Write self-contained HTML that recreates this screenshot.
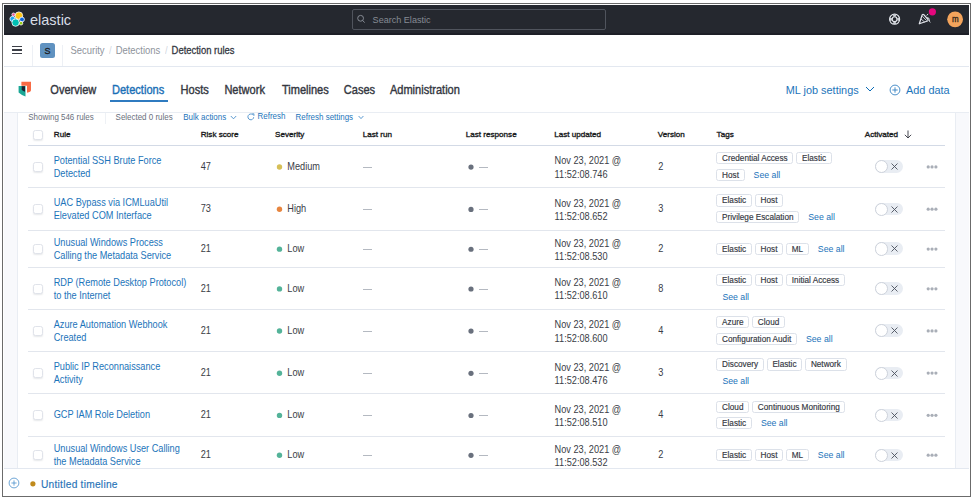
<!DOCTYPE html><html><head><meta charset="utf-8"><style>
*{margin:0;padding:0;box-sizing:content-box}
html,body{width:976px;height:500px;overflow:hidden;background:#fff}
body{position:relative;font-family:"Liberation Sans",sans-serif}
.b,.t{position:absolute}
.t{white-space:nowrap}
.tagline{position:absolute;display:flex;align-items:center;height:12.3px;white-space:nowrap}
.badge{display:inline-block;height:10.3px;line-height:12.4px;border:1px solid #dce1e9;border-radius:2.5px;padding:0 4.7px;font-size:8.2px;color:#343741;margin-right:3px;background:#fff;-webkit-text-stroke:0.15px #343741}
.seeall{display:inline-block;font-size:8.73px;color:#1c74ba;padding-left:6px;line-height:12px}
.toggle{position:absolute;width:28px;height:12.6px;border-radius:7px;background:#e9edf3}
.knob{position:absolute;left:0;top:0;width:11.2px;height:11.2px;border-radius:50%;background:#fff;border:0.7px solid #cdd2db}
</style></head><body><div class="b" style="left:2px;top:3px;width:967px;height:492px;border:1px solid #6b6b6b;"></div>
<div class="b" style="left:4px;top:5px;width:965px;height:30px;background:#25282f;"></div>
<div class="b" style="left:4px;top:33px;width:965px;height:2px;background:#1d1f27;"></div>
<div class="b" style="left:4px;top:66px;width:965px;height:1px;background:#e3e8f0;"></div>
<div class="b" style="left:4px;top:112px;width:965px;height:1px;background:#e9edf3;"></div>
<div class="b" style="left:4px;top:113px;width:965px;height:355px;background:#f8f9fc;"></div>
<div class="b" style="left:17px;top:113px;width:937px;height:355px;background:#fff;border-left:1px solid #e9edf3;border-right:1px solid #e9edf3;"></div>
<div class="b" style="left:4px;top:468px;width:965px;height:1px;background:#e3e8f0;"></div>
<div class="b" style="left:4px;top:469px;width:965px;height:27px;background:#fff;"></div>
<svg class="b" style="left:8px;top:10px" width="18" height="18" viewBox="0 0 18 18">
<g stroke="#fff" stroke-width="0.8">
<circle cx="10.9" cy="5.7" r="3.8" fill="#fec514"/>
<circle cx="4.5" cy="8.9" r="2.6" fill="#1ba9f5"/>
<circle cx="14" cy="9.5" r="2.4" fill="#0b64dd"/>
<circle cx="13" cy="13.2" r="1.8" fill="#93c90e"/>
<circle cx="7.6" cy="12.6" r="3.7" fill="#00bfb3"/>
<circle cx="5.5" cy="4.6" r="1.6" fill="#f04e98"/>
</g></svg>
<div class="t" style="left:30.00px;top:10.98px;font-size:14.5px;line-height:19px;color:#d8dde6;font-weight:400;">elastic</div>
<div class="b" style="left:352px;top:9px;width:252px;height:19px;border:1.3px solid #50545d;border-radius:2px;background:#25282f;"></div>
<svg class="b" style="left:356px;top:14px" width="10" height="10" viewBox="0 0 10 10"><circle cx="4.6" cy="4.3" r="2.9" fill="none" stroke="#868b94" stroke-width="1"/><path d="M6.6 6.4 L8.6 8.6" stroke="#868b94" stroke-width="1"/></svg>
<div class="t" style="left:372.60px;top:13.76px;font-size:9.07px;line-height:12px;color:#868b94;font-weight:400;transform:scaleY(1.1);transform-origin:0 9.14px;">Search Elastic</div>
<svg class="b" style="left:888px;top:13px" width="13" height="13" viewBox="0 0 13 13"><circle cx="6.6" cy="6.2" r="5.05" fill="none" stroke="#e8ebf0" stroke-width="1.1"/><circle cx="6.6" cy="6.2" r="2.4" fill="none" stroke="#e8ebf0" stroke-width="1.1"/><path d="M10.08 4.80 A3.75 3.75 0 0 1 10.08 7.60 M8.00 9.68 A3.75 3.75 0 0 1 5.20 9.68 M3.12 7.60 A3.75 3.75 0 0 1 3.12 4.80 M5.20 2.72 A3.75 3.75 0 0 1 8.00 2.72" fill="none" stroke="#c9ccd2" stroke-width="2.2"/></svg>
<svg class="b" style="left:918px;top:13px" width="14" height="12" viewBox="0 0 14 12"><path d="M1.3 10.8 L4.2 1.8 Q5 1 6 1.8 L10 6.5 Q10.5 7.5 9.5 8 Z" fill="none" stroke="#e3e6ec" stroke-width="1.2" stroke-linejoin="round"/><path d="M3 6 L6.8 9.2 M4.3 3.2 L8.6 7.6" fill="none" stroke="#e3e6ec" stroke-width="0.8"/><path d="M9 4.8 Q11.3 4.3 11.2 6.6 Q11.2 8.6 12.3 9.4 M8.6 2.4 L10.2 1" fill="none" stroke="#e3e6ec" stroke-width="1"/></svg>
<svg class="b" style="left:927px;top:7px" width="10" height="10"><circle cx="5.40" cy="4.80" r="3.6" fill="#e6077e"/></svg>
<svg class="b" style="left:946px;top:10px" width="18" height="18"><circle cx="9.10" cy="9.30" r="7.9" fill="#f3a45c"/></svg>
<div class="t" style="left:951.90px;top:14.73px;font-size:8.0px;line-height:10px;color:#2a2118;font-weight:400;transform:scaleY(1.05);transform-origin:0 7.77px;-webkit-text-stroke:0.25px #2a2118;">m</div>
<div class="b" style="left:12px;top:46.099999999999994px;width:10.2px;height:1.4px;background:#3d4048;"></div>
<div class="b" style="left:12px;top:49.4px;width:10.2px;height:1.4px;background:#3d4048;"></div>
<div class="b" style="left:12px;top:52.699999999999996px;width:10.2px;height:1.4px;background:#3d4048;"></div>
<div class="b" style="left:32px;top:45px;width:1px;height:21px;background:#edf0f5;"></div>
<div class="b" style="left:40px;top:43px;width:15px;height:15px;background:#6092c0;border-radius:2.5px;"></div>
<div class="t" style="left:44.60px;top:44.88px;font-size:9.0px;line-height:12px;color:#1a1c21;font-weight:400;transform:scaleY(1.05);transform-origin:0 9.12px;-webkit-text-stroke:0.3px #1a1c21;">S</div>
<div class="b" style="left:62px;top:45px;width:1px;height:21px;background:#edf0f5;"></div>
<div class="t" style="left:70.50px;top:44.53px;font-size:9.45px;line-height:12px;color:#8e939b;font-weight:400;transform:scaleY(1.1);transform-origin:0 9.27px;">Security</div>
<div class="t" style="left:109.00px;top:44.53px;font-size:9.45px;line-height:12px;color:#d3d8df;font-weight:400;transform:scaleY(1.1);transform-origin:0 9.27px;">/</div>
<div class="t" style="left:115.70px;top:44.53px;font-size:9.45px;line-height:12px;color:#8e939b;font-weight:400;transform:scaleY(1.1);transform-origin:0 9.27px;">Detections</div>
<div class="t" style="left:165.00px;top:44.53px;font-size:9.45px;line-height:12px;color:#d3d8df;font-weight:400;transform:scaleY(1.1);transform-origin:0 9.27px;">/</div>
<div class="t" style="left:171.60px;top:44.53px;font-size:9.45px;line-height:12px;color:#343741;font-weight:400;transform:scaleY(1.1);transform-origin:0 9.27px;-webkit-text-stroke:0.25px #343741;">Detection rules</div>
<svg class="b" style="left:17px;top:80px" width="16" height="18" viewBox="0 0 16 18">
<path d="M4.4 1.8 H14 V10 Q14 12 10 12.8 V5.8 H4.4 Z" fill="#f86b45"/>
<path d="M1.6 6 H8.5 V16.6 Q5 15.5 1.6 12.5 Z" fill="#1ba796"/>
<path d="M4.7 6.3 H8 V11.8 Q5 11 4.7 9.5 Z" fill="#1d1e2f"/>
</svg>
<div class="t" style="left:50.30px;top:83.07px;font-size:11.05px;line-height:14px;color:#343741;font-weight:400;transform:scaleY(1.1);transform-origin:0 10.83px;-webkit-text-stroke:0.35px currentColor;">Overview</div>
<div class="t" style="left:112.00px;top:83.07px;font-size:11.05px;line-height:14px;color:#1a6fb6;font-weight:400;transform:scaleY(1.1);transform-origin:0 10.83px;-webkit-text-stroke:0.35px currentColor;">Detections</div>
<div class="b" style="left:110px;top:100px;width:58px;height:2px;background:#2f7bc0;"></div>
<div class="t" style="left:180.60px;top:83.07px;font-size:11.05px;line-height:14px;color:#343741;font-weight:400;transform:scaleY(1.1);transform-origin:0 10.83px;-webkit-text-stroke:0.35px currentColor;">Hosts</div>
<div class="t" style="left:224.40px;top:83.07px;font-size:11.05px;line-height:14px;color:#343741;font-weight:400;transform:scaleY(1.1);transform-origin:0 10.83px;-webkit-text-stroke:0.35px currentColor;">Network</div>
<div class="t" style="left:281.90px;top:83.07px;font-size:11.05px;line-height:14px;color:#343741;font-weight:400;transform:scaleY(1.1);transform-origin:0 10.83px;-webkit-text-stroke:0.35px currentColor;">Timelines</div>
<div class="t" style="left:343.80px;top:83.07px;font-size:11.05px;line-height:14px;color:#343741;font-weight:400;transform:scaleY(1.1);transform-origin:0 10.83px;-webkit-text-stroke:0.35px currentColor;">Cases</div>
<div class="t" style="left:389.90px;top:83.07px;font-size:11.05px;line-height:14px;color:#343741;font-weight:400;transform:scaleY(1.1);transform-origin:0 10.83px;-webkit-text-stroke:0.35px currentColor;">Administration</div>
<div class="t" style="left:785.80px;top:82.72px;font-size:10.9px;line-height:14px;color:#1c74ba;font-weight:400;">ML job settings</div>
<svg class="b" style="left:865px;top:86px" width="10" height="6" viewBox="0 0 10 6"><path d="M1 1 L5 5 L9 1" fill="none" stroke="#0b6bb6" stroke-width="1"/></svg>
<svg class="b" style="left:889px;top:83.5px" width="12" height="12" viewBox="0 0 12 12"><circle cx="6" cy="6" r="4.9" fill="none" stroke="#2a7bbf" stroke-width="0.85"/><path d="M6 3.3 V8.7 M3.3 6 H8.7" stroke="#2a7bbf" stroke-width="0.85"/></svg>
<div class="t" style="left:906.00px;top:82.72px;font-size:10.9px;line-height:14px;color:#1c74ba;font-weight:400;">Add data</div>
<div class="t" style="left:28.30px;top:113.44px;font-size:7.96px;line-height:10px;color:#69707d;font-weight:400;transform:scaleY(1.1);transform-origin:0 7.76px;">Showing 546 rules</div>
<div class="b" style="left:104.5px;top:113px;width:1px;height:11px;background:#eef1f5;"></div>
<div class="t" style="left:115.60px;top:113.44px;font-size:7.96px;line-height:10px;color:#69707d;font-weight:400;transform:scaleY(1.1);transform-origin:0 7.76px;">Selected 0 rules</div>
<div class="t" style="left:183.30px;top:113.44px;font-size:7.96px;line-height:10px;color:#1c74ba;font-weight:400;transform:scaleY(1.1);transform-origin:0 7.76px;">Bulk actions</div>
<svg class="b" style="left:230px;top:115px" width="7" height="5" viewBox="0 0 7 5"><path d="M0.8 1 L3.5 3.8 L6.2 1" fill="none" stroke="#3f88c8" stroke-width="0.85"/></svg>
<svg class="b" style="left:247px;top:113px" width="8" height="8" viewBox="0 0 8 8"><path d="M6.7 4.2 A2.9 2.9 0 1 1 5.6 1.6" fill="none" stroke="#3f88c8" stroke-width="0.85"/><path d="M6.9 0.7 V2.9 M6.9 0.9 H4.9" fill="none" stroke="#3f88c8" stroke-width="0.85"/></svg>
<div class="t" style="left:257.60px;top:112.44px;font-size:7.96px;line-height:10px;color:#1c74ba;font-weight:400;transform:scaleY(1.1);transform-origin:0 7.76px;">Refresh</div>
<div class="t" style="left:295.60px;top:113.44px;font-size:7.96px;line-height:10px;color:#1c74ba;font-weight:400;transform:scaleY(1.1);transform-origin:0 7.76px;">Refresh settings</div>
<svg class="b" style="left:358px;top:115px" width="6" height="5" viewBox="0 0 6 5"><path d="M0.6 1 L3 3.6 L5.4 1" fill="none" stroke="#3f88c8" stroke-width="0.85"/></svg>
<div class="b" style="left:33.3px;top:129.5px;width:9.6px;height:10.2px;border:1px solid #e0e3ea;border-radius:2.5px;box-sizing:border-box;background:#fff;box-shadow:0 1px 1.5px rgba(60,70,90,0.12);"></div>
<div class="t" style="left:53.80px;top:129.29px;font-size:8.1px;line-height:11px;color:#1a1c21;font-weight:400;-webkit-text-stroke:0.35px currentColor;">Rule</div>
<div class="t" style="left:200.70px;top:129.29px;font-size:8.1px;line-height:11px;color:#1a1c21;font-weight:400;-webkit-text-stroke:0.35px currentColor;">Risk score</div>
<div class="t" style="left:275.00px;top:129.29px;font-size:8.1px;line-height:11px;color:#1a1c21;font-weight:400;-webkit-text-stroke:0.35px currentColor;">Severity</div>
<div class="t" style="left:362.70px;top:129.29px;font-size:8.1px;line-height:11px;color:#1a1c21;font-weight:400;-webkit-text-stroke:0.35px currentColor;">Last run</div>
<div class="t" style="left:465.80px;top:129.29px;font-size:8.1px;line-height:11px;color:#1a1c21;font-weight:400;-webkit-text-stroke:0.35px currentColor;">Last response</div>
<div class="t" style="left:554.30px;top:129.29px;font-size:8.1px;line-height:11px;color:#1a1c21;font-weight:400;-webkit-text-stroke:0.35px currentColor;">Last updated</div>
<div class="t" style="left:657.80px;top:129.29px;font-size:8.1px;line-height:11px;color:#1a1c21;font-weight:400;-webkit-text-stroke:0.35px currentColor;">Version</div>
<div class="t" style="left:716.60px;top:129.29px;font-size:8.1px;line-height:11px;color:#1a1c21;font-weight:400;-webkit-text-stroke:0.35px currentColor;">Tags</div>
<div class="t" style="left:864.80px;top:129.29px;font-size:8.1px;line-height:11px;color:#1a1c21;font-weight:400;-webkit-text-stroke:0.35px currentColor;">Activated</div>
<svg class="b" style="left:903.5px;top:129.5px" width="8" height="9" viewBox="0 0 8 9"><path d="M4 0.5 V8 M0.8 4.8 L4 8 L7.2 4.8" fill="none" stroke="#343741" stroke-width="0.9"/></svg>
<div class="b" style="left:28px;top:145px;width:917px;height:1px;background:#d3dae6;"></div>
<div class="b" style="left:33.2px;top:161.60000000000002px;width:9.6px;height:10.2px;border:1px solid #e0e3ea;border-radius:2.5px;box-sizing:border-box;background:#fff;box-shadow:0 1px 1.5px rgba(60,70,90,0.12);"></div>
<div class="t" style="left:53.70px;top:154.71px;font-size:9.2px;line-height:12px;color:#1c74ba;font-weight:400;transform:scaleY(1.1);transform-origin:0 9.19px;">Potential SSH Brute Force</div>
<div class="t" style="left:53.70px;top:167.81px;font-size:9.2px;line-height:12px;color:#1c74ba;font-weight:400;transform:scaleY(1.1);transform-origin:0 9.19px;">Detected</div>
<div class="t" style="left:200.70px;top:160.91px;font-size:9.2px;line-height:12px;color:#3a3d46;font-weight:400;transform:scaleY(1.1);transform-origin:0 9.19px;">47</div>
<svg class="b" style="left:275px;top:163px" width="8" height="8"><circle cx="4.50" cy="4.00" r="2.7" fill="#d6bf57"/></svg>
<div class="t" style="left:287.30px;top:160.91px;font-size:9.2px;line-height:12px;color:#3a3d46;font-weight:400;transform:scaleY(1.1);transform-origin:0 9.19px;">Medium</div>
<div class="b" style="left:363px;top:166.60000000000002px;width:9px;height:0.8px;background:#b4b9c1;"></div>
<svg class="b" style="left:467px;top:163px" width="8" height="8"><circle cx="4.00" cy="4.10" r="2.6" fill="#69707d"/></svg>
<div class="b" style="left:478.7px;top:166.60000000000002px;width:9px;height:0.8px;background:#b4b9c1;"></div>
<div class="t" style="left:554.60px;top:155.46px;font-size:9.2px;line-height:12px;color:#3a3d46;font-weight:400;transform:scaleY(1.1);transform-origin:0 9.19px;">Nov 23, 2021 @</div>
<div class="t" style="left:554.60px;top:168.51px;font-size:9.2px;line-height:12px;color:#3a3d46;font-weight:400;transform:scaleY(1.1);transform-origin:0 9.19px;">11:52:08.746</div>
<div class="t" style="left:658.20px;top:160.91px;font-size:9.2px;line-height:12px;color:#3a3d46;font-weight:400;transform:scaleY(1.1);transform-origin:0 9.19px;">2</div>
<div class="tagline" style="left:716.4px;top:152.10px;"><span class="badge">Credential Access</span><span class="badge">Elastic</span></div>
<div class="tagline" style="left:716.4px;top:168.80px;"><span class="badge">Host</span><span class="seeall">See all</span></div>
<div class="toggle" style="left:875px;top:160.30px;"><div class="knob"></div><svg style="position:absolute;left:16px;top:3px" width="7" height="7" viewBox="0 0 7 7"><path d="M0.5 0.5 L6.5 6.5 M6.5 0.5 L0.5 6.5" stroke="#4a505c" stroke-width="0.9"/></svg></div>
<svg class="b" style="left:925px;top:164px" width="6" height="6"><circle cx="3.20" cy="2.90" r="1.6" fill="#a9aeb7"/></svg>
<svg class="b" style="left:929px;top:164px" width="6" height="6"><circle cx="3.05" cy="2.90" r="1.6" fill="#a9aeb7"/></svg>
<svg class="b" style="left:933px;top:164px" width="6" height="6"><circle cx="2.90" cy="2.90" r="1.6" fill="#a9aeb7"/></svg>
<div class="b" style="left:28px;top:187px;width:917px;height:1px;background:#e2e6ed;"></div>
<div class="b" style="left:33.2px;top:203.9px;width:9.6px;height:10.2px;border:1px solid #e0e3ea;border-radius:2.5px;box-sizing:border-box;background:#fff;box-shadow:0 1px 1.5px rgba(60,70,90,0.12);"></div>
<div class="t" style="left:53.70px;top:197.01px;font-size:9.2px;line-height:12px;color:#1c74ba;font-weight:400;transform:scaleY(1.1);transform-origin:0 9.19px;">UAC Bypass via ICMLuaUtil</div>
<div class="t" style="left:53.70px;top:210.11px;font-size:9.2px;line-height:12px;color:#1c74ba;font-weight:400;transform:scaleY(1.1);transform-origin:0 9.19px;">Elevated COM Interface</div>
<div class="t" style="left:200.70px;top:203.21px;font-size:9.2px;line-height:12px;color:#3a3d46;font-weight:400;transform:scaleY(1.1);transform-origin:0 9.19px;">73</div>
<svg class="b" style="left:275px;top:205px" width="8" height="8"><circle cx="4.50" cy="4.30" r="2.7" fill="#e7853f"/></svg>
<div class="t" style="left:287.30px;top:203.21px;font-size:9.2px;line-height:12px;color:#3a3d46;font-weight:400;transform:scaleY(1.1);transform-origin:0 9.19px;">High</div>
<div class="b" style="left:363px;top:208.9px;width:9px;height:0.8px;background:#b4b9c1;"></div>
<svg class="b" style="left:467px;top:205px" width="8" height="8"><circle cx="4.00" cy="4.40" r="2.6" fill="#69707d"/></svg>
<div class="b" style="left:478.7px;top:208.9px;width:9px;height:0.8px;background:#b4b9c1;"></div>
<div class="t" style="left:554.60px;top:197.76px;font-size:9.2px;line-height:12px;color:#3a3d46;font-weight:400;transform:scaleY(1.1);transform-origin:0 9.19px;">Nov 23, 2021 @</div>
<div class="t" style="left:554.60px;top:210.81px;font-size:9.2px;line-height:12px;color:#3a3d46;font-weight:400;transform:scaleY(1.1);transform-origin:0 9.19px;">11:52:08.652</div>
<div class="t" style="left:658.20px;top:203.21px;font-size:9.2px;line-height:12px;color:#3a3d46;font-weight:400;transform:scaleY(1.1);transform-origin:0 9.19px;">3</div>
<div class="tagline" style="left:716.4px;top:194.40px;"><span class="badge">Elastic</span><span class="badge">Host</span></div>
<div class="tagline" style="left:716.4px;top:211.10px;"><span class="badge">Privilege Escalation</span><span class="seeall">See all</span></div>
<div class="toggle" style="left:875px;top:202.60px;"><div class="knob"></div><svg style="position:absolute;left:16px;top:3px" width="7" height="7" viewBox="0 0 7 7"><path d="M0.5 0.5 L6.5 6.5 M6.5 0.5 L0.5 6.5" stroke="#4a505c" stroke-width="0.9"/></svg></div>
<svg class="b" style="left:925px;top:206px" width="6" height="6"><circle cx="3.20" cy="3.20" r="1.6" fill="#a9aeb7"/></svg>
<svg class="b" style="left:929px;top:206px" width="6" height="6"><circle cx="3.05" cy="3.20" r="1.6" fill="#a9aeb7"/></svg>
<svg class="b" style="left:933px;top:206px" width="6" height="6"><circle cx="2.90" cy="3.20" r="1.6" fill="#a9aeb7"/></svg>
<div class="b" style="left:28px;top:230px;width:917px;height:1px;background:#e2e6ed;"></div>
<div class="b" style="left:33.2px;top:243.75px;width:9.6px;height:10.2px;border:1px solid #e0e3ea;border-radius:2.5px;box-sizing:border-box;background:#fff;box-shadow:0 1px 1.5px rgba(60,70,90,0.12);"></div>
<div class="t" style="left:53.70px;top:236.86px;font-size:9.2px;line-height:12px;color:#1c74ba;font-weight:400;transform:scaleY(1.1);transform-origin:0 9.19px;">Unusual Windows Process</div>
<div class="t" style="left:53.70px;top:249.96px;font-size:9.2px;line-height:12px;color:#1c74ba;font-weight:400;transform:scaleY(1.1);transform-origin:0 9.19px;">Calling the Metadata Service</div>
<div class="t" style="left:200.70px;top:243.06px;font-size:9.2px;line-height:12px;color:#3a3d46;font-weight:400;transform:scaleY(1.1);transform-origin:0 9.19px;">21</div>
<svg class="b" style="left:275px;top:245px" width="8" height="8"><circle cx="4.50" cy="4.15" r="2.7" fill="#54b399"/></svg>
<div class="t" style="left:287.30px;top:243.06px;font-size:9.2px;line-height:12px;color:#3a3d46;font-weight:400;transform:scaleY(1.1);transform-origin:0 9.19px;">Low</div>
<div class="b" style="left:363px;top:248.75px;width:9px;height:0.8px;background:#b4b9c1;"></div>
<svg class="b" style="left:467px;top:245px" width="8" height="8"><circle cx="4.00" cy="4.25" r="2.6" fill="#69707d"/></svg>
<div class="b" style="left:478.7px;top:248.75px;width:9px;height:0.8px;background:#b4b9c1;"></div>
<div class="t" style="left:554.60px;top:237.61px;font-size:9.2px;line-height:12px;color:#3a3d46;font-weight:400;transform:scaleY(1.1);transform-origin:0 9.19px;">Nov 23, 2021 @</div>
<div class="t" style="left:554.60px;top:250.66px;font-size:9.2px;line-height:12px;color:#3a3d46;font-weight:400;transform:scaleY(1.1);transform-origin:0 9.19px;">11:52:08.530</div>
<div class="t" style="left:658.20px;top:243.06px;font-size:9.2px;line-height:12px;color:#3a3d46;font-weight:400;transform:scaleY(1.1);transform-origin:0 9.19px;">2</div>
<div class="tagline" style="left:716.4px;top:242.60px;"><span class="badge">Elastic</span><span class="badge">Host</span><span class="badge">ML</span><span class="seeall">See all</span></div>
<div class="toggle" style="left:875px;top:242.45px;"><div class="knob"></div><svg style="position:absolute;left:16px;top:3px" width="7" height="7" viewBox="0 0 7 7"><path d="M0.5 0.5 L6.5 6.5 M6.5 0.5 L0.5 6.5" stroke="#4a505c" stroke-width="0.9"/></svg></div>
<svg class="b" style="left:925px;top:246px" width="6" height="6"><circle cx="3.20" cy="3.05" r="1.6" fill="#a9aeb7"/></svg>
<svg class="b" style="left:929px;top:246px" width="6" height="6"><circle cx="3.05" cy="3.05" r="1.6" fill="#a9aeb7"/></svg>
<svg class="b" style="left:933px;top:246px" width="6" height="6"><circle cx="2.90" cy="3.05" r="1.6" fill="#a9aeb7"/></svg>
<div class="b" style="left:28px;top:267px;width:917px;height:1px;background:#e2e6ed;"></div>
<div class="b" style="left:33.2px;top:283.5px;width:9.6px;height:10.2px;border:1px solid #e0e3ea;border-radius:2.5px;box-sizing:border-box;background:#fff;box-shadow:0 1px 1.5px rgba(60,70,90,0.12);"></div>
<div class="t" style="left:53.70px;top:276.61px;font-size:9.2px;line-height:12px;color:#1c74ba;font-weight:400;transform:scaleY(1.1);transform-origin:0 9.19px;">RDP (Remote Desktop Protocol)</div>
<div class="t" style="left:53.70px;top:289.71px;font-size:9.2px;line-height:12px;color:#1c74ba;font-weight:400;transform:scaleY(1.1);transform-origin:0 9.19px;">to the Internet</div>
<div class="t" style="left:200.70px;top:282.81px;font-size:9.2px;line-height:12px;color:#3a3d46;font-weight:400;transform:scaleY(1.1);transform-origin:0 9.19px;">21</div>
<svg class="b" style="left:275px;top:285px" width="8" height="8"><circle cx="4.50" cy="3.90" r="2.7" fill="#54b399"/></svg>
<div class="t" style="left:287.30px;top:282.81px;font-size:9.2px;line-height:12px;color:#3a3d46;font-weight:400;transform:scaleY(1.1);transform-origin:0 9.19px;">Low</div>
<div class="b" style="left:363px;top:288.5px;width:9px;height:0.8px;background:#b4b9c1;"></div>
<svg class="b" style="left:467px;top:285px" width="8" height="8"><circle cx="4.00" cy="4.00" r="2.6" fill="#69707d"/></svg>
<div class="b" style="left:478.7px;top:288.5px;width:9px;height:0.8px;background:#b4b9c1;"></div>
<div class="t" style="left:554.60px;top:277.36px;font-size:9.2px;line-height:12px;color:#3a3d46;font-weight:400;transform:scaleY(1.1);transform-origin:0 9.19px;">Nov 23, 2021 @</div>
<div class="t" style="left:554.60px;top:290.41px;font-size:9.2px;line-height:12px;color:#3a3d46;font-weight:400;transform:scaleY(1.1);transform-origin:0 9.19px;">11:52:08.610</div>
<div class="t" style="left:658.20px;top:282.81px;font-size:9.2px;line-height:12px;color:#3a3d46;font-weight:400;transform:scaleY(1.1);transform-origin:0 9.19px;">8</div>
<div class="tagline" style="left:716.4px;top:274.00px;"><span class="badge">Elastic</span><span class="badge">Host</span><span class="badge">Initial Access</span></div>
<div class="tagline" style="left:716.4px;top:290.70px;"><span class="seeall">See all</span></div>
<div class="toggle" style="left:875px;top:282.20px;"><div class="knob"></div><svg style="position:absolute;left:16px;top:3px" width="7" height="7" viewBox="0 0 7 7"><path d="M0.5 0.5 L6.5 6.5 M6.5 0.5 L0.5 6.5" stroke="#4a505c" stroke-width="0.9"/></svg></div>
<svg class="b" style="left:925px;top:286px" width="6" height="6"><circle cx="3.20" cy="2.80" r="1.6" fill="#a9aeb7"/></svg>
<svg class="b" style="left:929px;top:286px" width="6" height="6"><circle cx="3.05" cy="2.80" r="1.6" fill="#a9aeb7"/></svg>
<svg class="b" style="left:933px;top:286px" width="6" height="6"><circle cx="2.90" cy="2.80" r="1.6" fill="#a9aeb7"/></svg>
<div class="b" style="left:28px;top:309px;width:917px;height:1px;background:#e2e6ed;"></div>
<div class="b" style="left:33.2px;top:325.6px;width:9.6px;height:10.2px;border:1px solid #e0e3ea;border-radius:2.5px;box-sizing:border-box;background:#fff;box-shadow:0 1px 1.5px rgba(60,70,90,0.12);"></div>
<div class="t" style="left:53.70px;top:318.71px;font-size:9.2px;line-height:12px;color:#1c74ba;font-weight:400;transform:scaleY(1.1);transform-origin:0 9.19px;">Azure Automation Webhook</div>
<div class="t" style="left:53.70px;top:331.81px;font-size:9.2px;line-height:12px;color:#1c74ba;font-weight:400;transform:scaleY(1.1);transform-origin:0 9.19px;">Created</div>
<div class="t" style="left:200.70px;top:324.91px;font-size:9.2px;line-height:12px;color:#3a3d46;font-weight:400;transform:scaleY(1.1);transform-origin:0 9.19px;">21</div>
<svg class="b" style="left:275px;top:327px" width="8" height="8"><circle cx="4.50" cy="4.00" r="2.7" fill="#54b399"/></svg>
<div class="t" style="left:287.30px;top:324.91px;font-size:9.2px;line-height:12px;color:#3a3d46;font-weight:400;transform:scaleY(1.1);transform-origin:0 9.19px;">Low</div>
<div class="b" style="left:363px;top:330.6px;width:9px;height:0.8px;background:#b4b9c1;"></div>
<svg class="b" style="left:467px;top:327px" width="8" height="8"><circle cx="4.00" cy="4.10" r="2.6" fill="#69707d"/></svg>
<div class="b" style="left:478.7px;top:330.6px;width:9px;height:0.8px;background:#b4b9c1;"></div>
<div class="t" style="left:554.60px;top:319.46px;font-size:9.2px;line-height:12px;color:#3a3d46;font-weight:400;transform:scaleY(1.1);transform-origin:0 9.19px;">Nov 23, 2021 @</div>
<div class="t" style="left:554.60px;top:332.51px;font-size:9.2px;line-height:12px;color:#3a3d46;font-weight:400;transform:scaleY(1.1);transform-origin:0 9.19px;">11:52:08.600</div>
<div class="t" style="left:658.20px;top:324.91px;font-size:9.2px;line-height:12px;color:#3a3d46;font-weight:400;transform:scaleY(1.1);transform-origin:0 9.19px;">4</div>
<div class="tagline" style="left:716.4px;top:316.10px;"><span class="badge">Azure</span><span class="badge">Cloud</span></div>
<div class="tagline" style="left:716.4px;top:332.80px;"><span class="badge">Configuration Audit</span><span class="seeall">See all</span></div>
<div class="toggle" style="left:875px;top:324.30px;"><div class="knob"></div><svg style="position:absolute;left:16px;top:3px" width="7" height="7" viewBox="0 0 7 7"><path d="M0.5 0.5 L6.5 6.5 M6.5 0.5 L0.5 6.5" stroke="#4a505c" stroke-width="0.9"/></svg></div>
<svg class="b" style="left:925px;top:328px" width="6" height="6"><circle cx="3.20" cy="2.90" r="1.6" fill="#a9aeb7"/></svg>
<svg class="b" style="left:929px;top:328px" width="6" height="6"><circle cx="3.05" cy="2.90" r="1.6" fill="#a9aeb7"/></svg>
<svg class="b" style="left:933px;top:328px" width="6" height="6"><circle cx="2.90" cy="2.90" r="1.6" fill="#a9aeb7"/></svg>
<div class="b" style="left:28px;top:351px;width:917px;height:1px;background:#e2e6ed;"></div>
<div class="b" style="left:33.2px;top:367.79999999999995px;width:9.6px;height:10.2px;border:1px solid #e0e3ea;border-radius:2.5px;box-sizing:border-box;background:#fff;box-shadow:0 1px 1.5px rgba(60,70,90,0.12);"></div>
<div class="t" style="left:53.70px;top:360.91px;font-size:9.2px;line-height:12px;color:#1c74ba;font-weight:400;transform:scaleY(1.1);transform-origin:0 9.19px;">Public IP Reconnaissance</div>
<div class="t" style="left:53.70px;top:374.01px;font-size:9.2px;line-height:12px;color:#1c74ba;font-weight:400;transform:scaleY(1.1);transform-origin:0 9.19px;">Activity</div>
<div class="t" style="left:200.70px;top:367.11px;font-size:9.2px;line-height:12px;color:#3a3d46;font-weight:400;transform:scaleY(1.1);transform-origin:0 9.19px;">21</div>
<svg class="b" style="left:275px;top:369px" width="8" height="8"><circle cx="4.50" cy="4.20" r="2.7" fill="#54b399"/></svg>
<div class="t" style="left:287.30px;top:367.11px;font-size:9.2px;line-height:12px;color:#3a3d46;font-weight:400;transform:scaleY(1.1);transform-origin:0 9.19px;">Low</div>
<div class="b" style="left:363px;top:372.79999999999995px;width:9px;height:0.8px;background:#b4b9c1;"></div>
<svg class="b" style="left:467px;top:369px" width="8" height="8"><circle cx="4.00" cy="4.30" r="2.6" fill="#69707d"/></svg>
<div class="b" style="left:478.7px;top:372.79999999999995px;width:9px;height:0.8px;background:#b4b9c1;"></div>
<div class="t" style="left:554.60px;top:361.66px;font-size:9.2px;line-height:12px;color:#3a3d46;font-weight:400;transform:scaleY(1.1);transform-origin:0 9.19px;">Nov 23, 2021 @</div>
<div class="t" style="left:554.60px;top:374.71px;font-size:9.2px;line-height:12px;color:#3a3d46;font-weight:400;transform:scaleY(1.1);transform-origin:0 9.19px;">11:52:08.476</div>
<div class="t" style="left:658.20px;top:367.11px;font-size:9.2px;line-height:12px;color:#3a3d46;font-weight:400;transform:scaleY(1.1);transform-origin:0 9.19px;">3</div>
<div class="tagline" style="left:716.4px;top:358.30px;"><span class="badge">Discovery</span><span class="badge">Elastic</span><span class="badge">Network</span></div>
<div class="tagline" style="left:716.4px;top:375.00px;"><span class="seeall">See all</span></div>
<div class="toggle" style="left:875px;top:366.50px;"><div class="knob"></div><svg style="position:absolute;left:16px;top:3px" width="7" height="7" viewBox="0 0 7 7"><path d="M0.5 0.5 L6.5 6.5 M6.5 0.5 L0.5 6.5" stroke="#4a505c" stroke-width="0.9"/></svg></div>
<svg class="b" style="left:925px;top:370px" width="6" height="6"><circle cx="3.20" cy="3.10" r="1.6" fill="#a9aeb7"/></svg>
<svg class="b" style="left:929px;top:370px" width="6" height="6"><circle cx="3.05" cy="3.10" r="1.6" fill="#a9aeb7"/></svg>
<svg class="b" style="left:933px;top:370px" width="6" height="6"><circle cx="2.90" cy="3.10" r="1.6" fill="#a9aeb7"/></svg>
<div class="b" style="left:28px;top:393px;width:917px;height:1px;background:#e2e6ed;"></div>
<div class="b" style="left:33.2px;top:410.0px;width:9.6px;height:10.2px;border:1px solid #e0e3ea;border-radius:2.5px;box-sizing:border-box;background:#fff;box-shadow:0 1px 1.5px rgba(60,70,90,0.12);"></div>
<div class="t" style="left:53.70px;top:409.31px;font-size:9.2px;line-height:12px;color:#1c74ba;font-weight:400;transform:scaleY(1.1);transform-origin:0 9.19px;">GCP IAM Role Deletion</div>
<div class="t" style="left:200.70px;top:409.31px;font-size:9.2px;line-height:12px;color:#3a3d46;font-weight:400;transform:scaleY(1.1);transform-origin:0 9.19px;">21</div>
<svg class="b" style="left:275px;top:411px" width="8" height="8"><circle cx="4.50" cy="4.40" r="2.7" fill="#54b399"/></svg>
<div class="t" style="left:287.30px;top:409.31px;font-size:9.2px;line-height:12px;color:#3a3d46;font-weight:400;transform:scaleY(1.1);transform-origin:0 9.19px;">Low</div>
<div class="b" style="left:363px;top:415.0px;width:9px;height:0.8px;background:#b4b9c1;"></div>
<svg class="b" style="left:467px;top:411px" width="8" height="8"><circle cx="4.00" cy="4.50" r="2.6" fill="#69707d"/></svg>
<div class="b" style="left:478.7px;top:415.0px;width:9px;height:0.8px;background:#b4b9c1;"></div>
<div class="t" style="left:554.60px;top:403.86px;font-size:9.2px;line-height:12px;color:#3a3d46;font-weight:400;transform:scaleY(1.1);transform-origin:0 9.19px;">Nov 23, 2021 @</div>
<div class="t" style="left:554.60px;top:416.91px;font-size:9.2px;line-height:12px;color:#3a3d46;font-weight:400;transform:scaleY(1.1);transform-origin:0 9.19px;">11:52:08.510</div>
<div class="t" style="left:658.20px;top:409.31px;font-size:9.2px;line-height:12px;color:#3a3d46;font-weight:400;transform:scaleY(1.1);transform-origin:0 9.19px;">4</div>
<div class="tagline" style="left:716.4px;top:400.50px;"><span class="badge">Cloud</span><span class="badge">Continuous Monitoring</span></div>
<div class="tagline" style="left:716.4px;top:417.20px;"><span class="badge">Elastic</span><span class="seeall">See all</span></div>
<div class="toggle" style="left:875px;top:408.70px;"><div class="knob"></div><svg style="position:absolute;left:16px;top:3px" width="7" height="7" viewBox="0 0 7 7"><path d="M0.5 0.5 L6.5 6.5 M6.5 0.5 L0.5 6.5" stroke="#4a505c" stroke-width="0.9"/></svg></div>
<svg class="b" style="left:925px;top:412px" width="6" height="6"><circle cx="3.20" cy="3.30" r="1.6" fill="#a9aeb7"/></svg>
<svg class="b" style="left:929px;top:412px" width="6" height="6"><circle cx="3.05" cy="3.30" r="1.6" fill="#a9aeb7"/></svg>
<svg class="b" style="left:933px;top:412px" width="6" height="6"><circle cx="2.90" cy="3.30" r="1.6" fill="#a9aeb7"/></svg>
<div class="b" style="left:28px;top:436px;width:917px;height:1px;background:#e2e6ed;"></div>
<div class="b" style="left:33.2px;top:449.85px;width:9.6px;height:10.2px;border:1px solid #e0e3ea;border-radius:2.5px;box-sizing:border-box;background:#fff;box-shadow:0 1px 1.5px rgba(60,70,90,0.12);"></div>
<div class="t" style="left:53.70px;top:442.96px;font-size:9.2px;line-height:12px;color:#1c74ba;font-weight:400;transform:scaleY(1.1);transform-origin:0 9.19px;">Unusual Windows User Calling</div>
<div class="t" style="left:53.70px;top:456.06px;font-size:9.2px;line-height:12px;color:#1c74ba;font-weight:400;transform:scaleY(1.1);transform-origin:0 9.19px;">the Metadata Service</div>
<div class="t" style="left:200.70px;top:449.16px;font-size:9.2px;line-height:12px;color:#3a3d46;font-weight:400;transform:scaleY(1.1);transform-origin:0 9.19px;">21</div>
<svg class="b" style="left:275px;top:451px" width="8" height="8"><circle cx="4.50" cy="4.25" r="2.7" fill="#54b399"/></svg>
<div class="t" style="left:287.30px;top:449.16px;font-size:9.2px;line-height:12px;color:#3a3d46;font-weight:400;transform:scaleY(1.1);transform-origin:0 9.19px;">Low</div>
<div class="b" style="left:363px;top:454.85px;width:9px;height:0.8px;background:#b4b9c1;"></div>
<svg class="b" style="left:467px;top:451px" width="8" height="8"><circle cx="4.00" cy="4.35" r="2.6" fill="#69707d"/></svg>
<div class="b" style="left:478.7px;top:454.85px;width:9px;height:0.8px;background:#b4b9c1;"></div>
<div class="t" style="left:554.60px;top:443.71px;font-size:9.2px;line-height:12px;color:#3a3d46;font-weight:400;transform:scaleY(1.1);transform-origin:0 9.19px;">Nov 23, 2021 @</div>
<div class="t" style="left:554.60px;top:456.76px;font-size:9.2px;line-height:12px;color:#3a3d46;font-weight:400;transform:scaleY(1.1);transform-origin:0 9.19px;">11:52:08.532</div>
<div class="t" style="left:658.20px;top:449.16px;font-size:9.2px;line-height:12px;color:#3a3d46;font-weight:400;transform:scaleY(1.1);transform-origin:0 9.19px;">2</div>
<div class="tagline" style="left:716.4px;top:448.70px;"><span class="badge">Elastic</span><span class="badge">Host</span><span class="badge">ML</span><span class="seeall">See all</span></div>
<div class="toggle" style="left:875px;top:448.55px;"><div class="knob"></div><svg style="position:absolute;left:16px;top:3px" width="7" height="7" viewBox="0 0 7 7"><path d="M0.5 0.5 L6.5 6.5 M6.5 0.5 L0.5 6.5" stroke="#4a505c" stroke-width="0.9"/></svg></div>
<svg class="b" style="left:925px;top:452px" width="6" height="6"><circle cx="3.20" cy="3.15" r="1.6" fill="#a9aeb7"/></svg>
<svg class="b" style="left:929px;top:452px" width="6" height="6"><circle cx="3.05" cy="3.15" r="1.6" fill="#a9aeb7"/></svg>
<svg class="b" style="left:933px;top:452px" width="6" height="6"><circle cx="2.90" cy="3.15" r="1.6" fill="#a9aeb7"/></svg>
<svg class="b" style="left:8px;top:477px" width="12" height="12" viewBox="0 0 12 12"><circle cx="6" cy="6" r="4.9" fill="none" stroke="#4a8fcb" stroke-width="0.8"/><path d="M6 3.4 V8.6 M3.4 6 H8.6" stroke="#4a8fcb" stroke-width="0.8"/></svg>
<svg class="b" style="left:29px;top:480px" width="8" height="8"><circle cx="3.90" cy="3.80" r="2.6" fill="#c08a1c"/></svg>
<div class="t" style="left:41.00px;top:477.77px;font-size:10.2px;line-height:13px;color:#2874b8;font-weight:400;-webkit-text-stroke:0.15px currentColor;letter-spacing:0.25px;">Untitled timeline</div></body></html>
